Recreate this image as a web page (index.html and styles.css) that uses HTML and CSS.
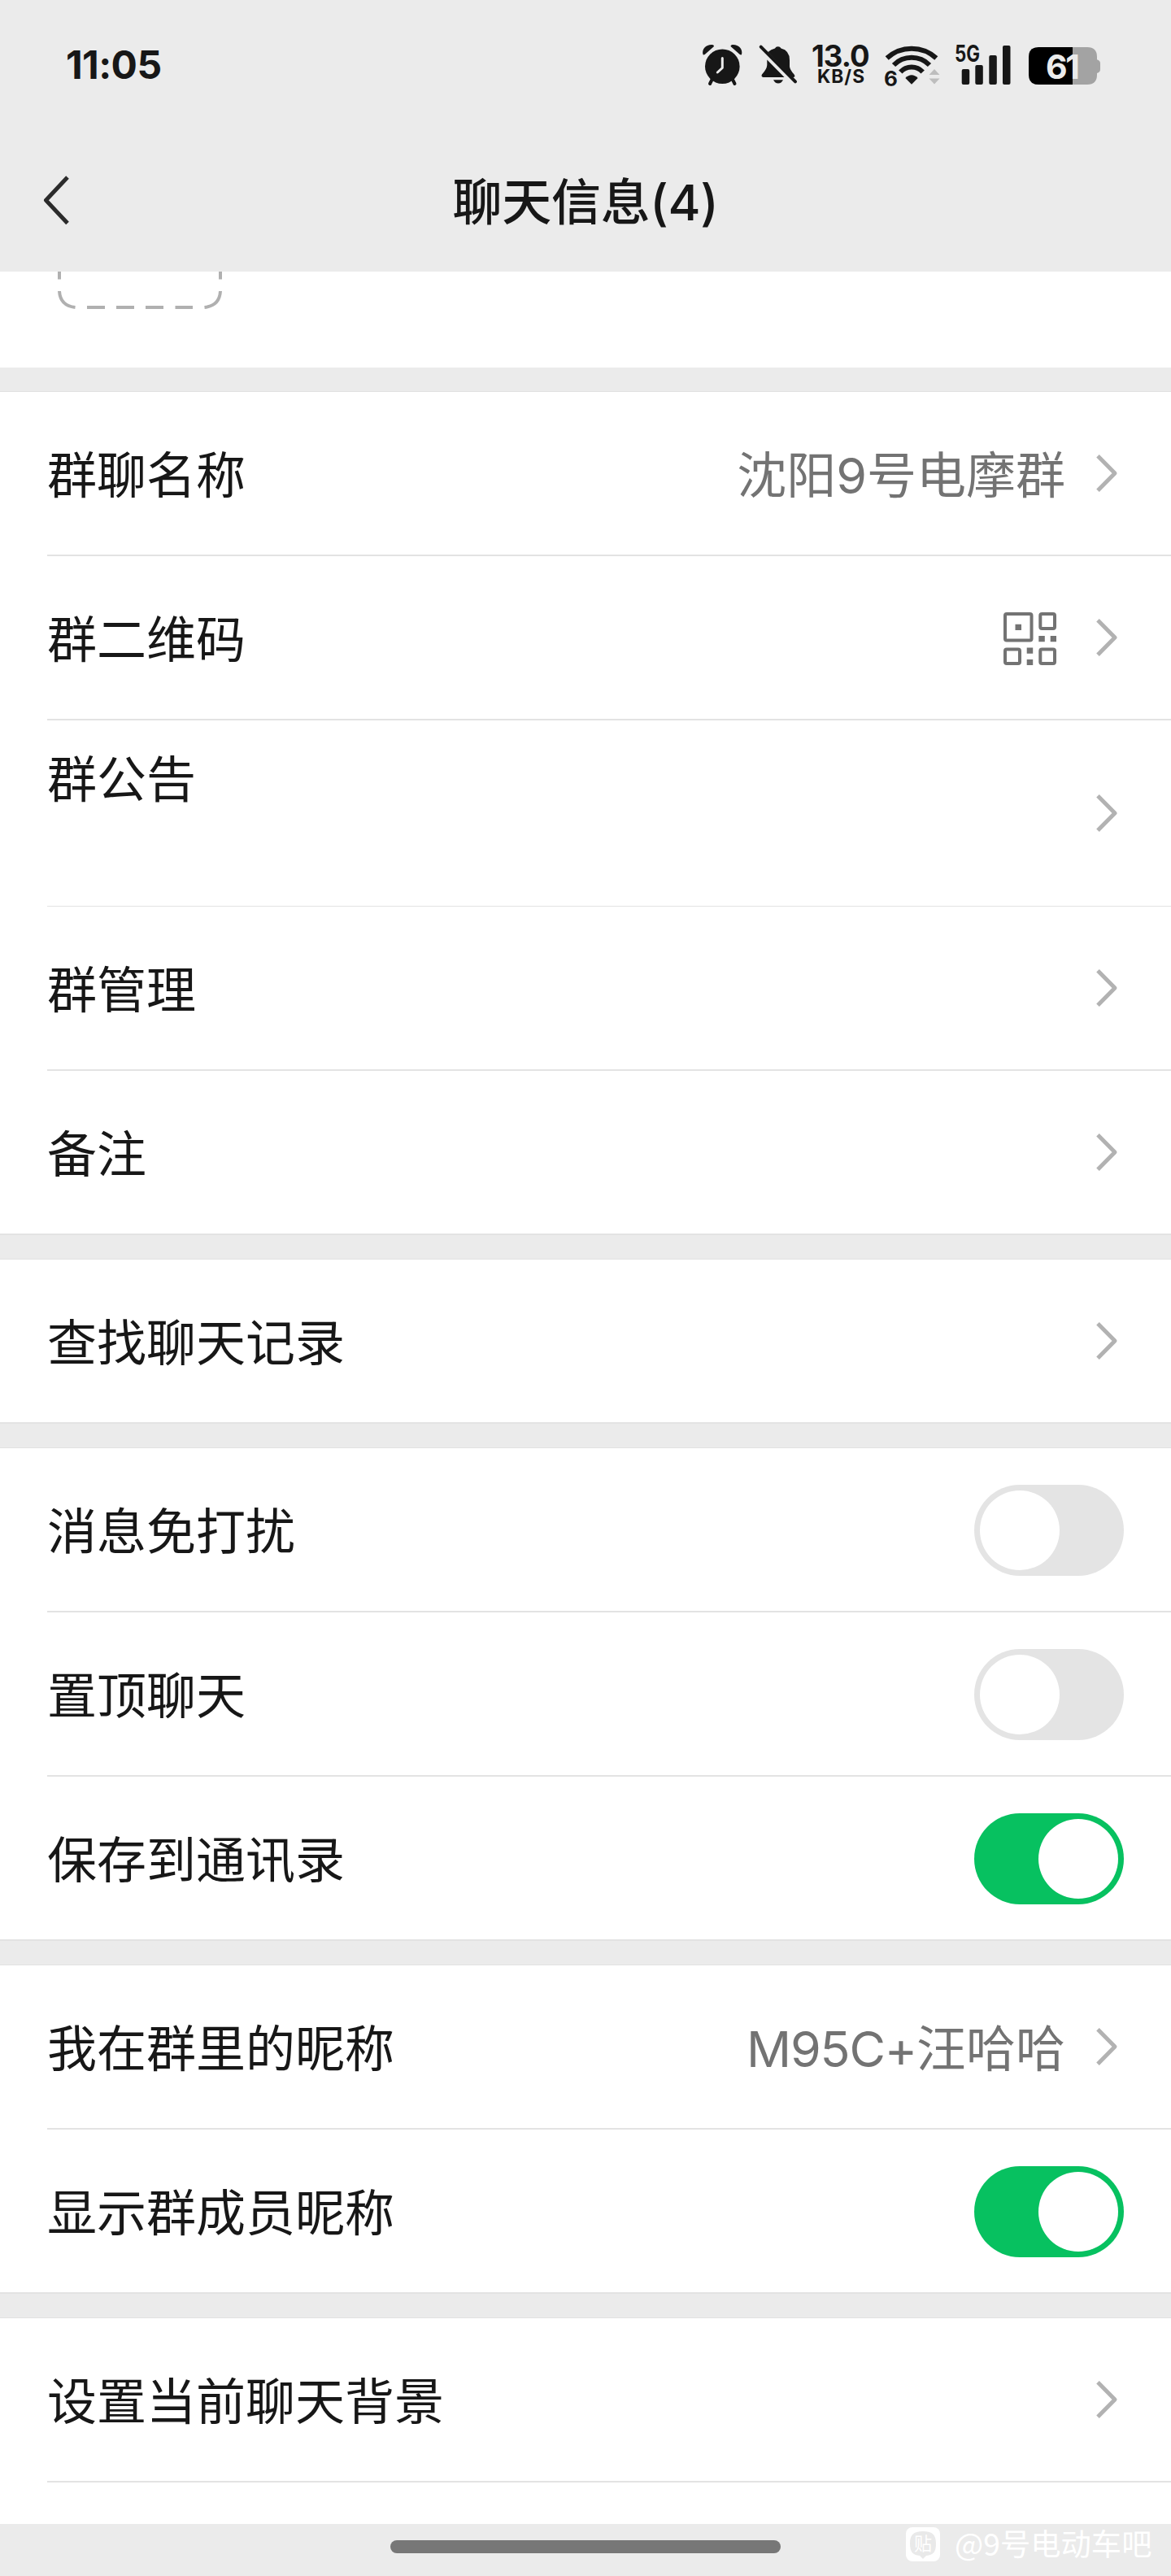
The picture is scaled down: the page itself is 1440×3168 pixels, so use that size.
FILE: index.html
```html
<!DOCTYPE html>
<html lang="zh-CN">
<head>
<meta charset="utf-8">
<title>聊天信息</title>
<link rel="stylesheet" href="styles.css">
</head>
<body>
<svg class="defs" aria-hidden="true">
  <symbol id="chevron" viewBox="0 0 28 50"><path d="M3 3.8 24 25 3 46.2" fill="none" stroke="#b2b2b2" stroke-width="5" stroke-linejoin="round"/></symbol>
</svg>
<div class="screen">
  <header class="top">
    <div class="status">
      <span class="time">11:05</span>
      <svg class="alarm" viewBox="862 50 52 60" width="52" height="60">
        <g fill="#171717"><circle cx="888.3" cy="81.7" r="21.3"/>
        <path d="M864.5 67C862.5 60 869 54.300 876 55Q879 56 877.500 57.500L867 66.800Q865 68 864.500 67ZM912 67C914 60 907.500 54.300 900.500 55Q897.500 56 899 57.500L909.500 66.800Q911.500 68 912 67Z"/></g>
        <path d="M876 97l-3 6M900.500 97l3 6" stroke="#171717" stroke-width="4" stroke-linecap="round"/>
        <path d="M888.300 71.500v12l-6 5.500" fill="none" stroke="#ebebeb" stroke-width="3" stroke-linecap="round" stroke-linejoin="round"/>
      </svg>
      <svg class="bell" viewBox="932 50 50 60" width="50" height="60">
        <g fill="#171717"><path d="M944.500 64Q948 60.500 953 59.500Q954 57.300 956.700 57.300T960.500 59.500Q971 62 971 74V82Q971.500 86 976.500 91.500Q978.500 94 976 95H974Z"/>
        <path d="M943.300 73.500 964.500 95H938.500Q935.500 94 937 91.500Q943 85 943.300 80Z"/>
        <path d="M951 98.300H963Q961 102.500 957 102.500T951 98.300Z"/></g>
        <path d="M935.700 57.700 978 100.300" stroke="#171717" stroke-width="4" stroke-linecap="round"/>
      </svg>
      <svg class="speed" viewBox="997 50 74 60" width="74" height="60" fill="#171717">
        <text x="998" y="81.700" font-size="36.500" font-weight="650" textLength="71.500">13.0</text>
        <text x="1005" y="102" font-size="22.700" font-weight="650" textLength="58">KB/S</text>
      </svg>
      <svg class="wifi" viewBox="1086 50 74 60" width="74" height="60">
        <path d="M1090.700 71.500A44.800 44.800 0 0 1 1151.300 71.500M1099 80A31 31 0 0 1 1143 80M1107.300 88.500A18.500 18.500 0 0 1 1134.700 88.500" fill="none" stroke="#171717" stroke-width="6"/>
        <path d="M1113.300 96Q1121 88.500 1128.700 96L1121 103.800Z" fill="#171717"/>
        <path d="M1142.500 92 1149 85 1155.500 92ZM1142.500 96.500H1155.500L1149 103.500Z" fill="#bdbdbd"/>
        <text x="1087" y="105.800" font-size="26" font-weight="700" fill="#171717">6</text>
      </svg>
      <svg class="signal" viewBox="1173 50 72 60" width="72" height="60" fill="#171717">
        <text x="1174" y="76" font-size="28" font-weight="700" textLength="31" lengthAdjust="spacingAndGlyphs">5G</text>
        <rect x="1182.700" y="85" width="9.500" height="19" rx="2"/><rect x="1199.300" y="80" width="9.500" height="24" rx="2"/><rect x="1216.300" y="68" width="9.500" height="36" rx="2"/><rect x="1233" y="56" width="9.500" height="48" rx="2"/>
      </svg>
      <svg class="battery" viewBox="1264 50 90 60" width="90" height="60">
        <path d="M1319 58h18q12 0 12 12v3.300q4 1 4 4.700v7.300q0 3.700-4 4.700v2q0 12-12 12h-18Z" fill="#a3a3a3"/>
        <path d="M1319 58h-42q-12 0-12 12v22q0 12 12 12h42Z" fill="#000"/>
        <text x="1286" y="96.500" font-size="41" font-weight="650" fill="#ebebeb" textLength="42">61</text>
      </svg>
    </div>
    <div class="nav">
      <svg class="back" viewBox="0 0 36 64" width="36" height="64"><path d="M31 4 4.500 32.300 31 60.500" fill="none" stroke="#2b2b2b" stroke-width="5" stroke-linejoin="round"/></svg>
      <h1 class="title">聊天信息(4)</h1>
    </div>
  </header>

  <section class="members">
    <svg viewBox="71 334 202 50" width="202" height="50"><g fill="none" stroke="#b0b0b0" stroke-width="4"><path d="M73 333V343.500M271 333V343.500M73 358Q74 376 92.500 378M271 358Q270 376 251.500 378"/><path d="M107 378h22M143 378h22M179 378h22M215.500 378h21.500"/></g></svg>
  </section>

  <section class="group">
    <div class="row"><span class="label">群聊名称</span><span class="value">沈阳9号电摩群</span><svg class="chev"><use href="#chevron"/></svg></div>
    <div class="row"><span class="label">群二维码</span>
      <svg class="qr" viewBox="0 0 65 65" width="65" height="65"><g fill="none" stroke="#737373" stroke-width="4"><rect x="2" y="2" width="32.500" height="32.500" rx="2"/><rect x="45.300" y="2" width="17.700" height="18" rx="2"/><rect x="2" y="45.500" width="18" height="17.500" rx="2"/><rect x="45.300" y="45.500" width="17.700" height="17.500" rx="2"/></g><path d="M14.500 14.700h7.500v7.300h-7.500ZM43.300 29h7.500v7.300h-7.500ZM57.700 29h7.300v7.300h-7.300ZM28.700 43.500h7.500v7.300h-7.500ZM28.700 58h7.500v7h-7.500Z" fill="#737373"/></svg>
      <svg class="chev"><use href="#chevron"/></svg></div>
    <div class="row notice"><span class="label">群公告</span><svg class="chev"><use href="#chevron"/></svg></div>
    <div class="row"><span class="label">群管理</span><svg class="chev"><use href="#chevron"/></svg></div>
    <div class="row"><span class="label">备注</span><svg class="chev"><use href="#chevron"/></svg></div>
  </section>

  <section class="group">
    <div class="row"><span class="label">查找聊天记录</span><svg class="chev"><use href="#chevron"/></svg></div>
  </section>

  <section class="group">
    <div class="row"><span class="label">消息免打扰</span><span class="switch"><i class="knob"></i></span></div>
    <div class="row"><span class="label">置顶聊天</span><span class="switch"><i class="knob"></i></span></div>
    <div class="row"><span class="label">保存到通讯录</span><span class="switch on"><i class="knob"></i></span></div>
  </section>

  <section class="group">
    <div class="row"><span class="label">我在群里的昵称</span><span class="value"><span class="latin">M95C+</span>汪哈哈</span><svg class="chev"><use href="#chevron"/></svg></div>
    <div class="row"><span class="label">显示群成员昵称</span><span class="switch on"><i class="knob"></i></span></div>
  </section>

  <section class="group last">
    <div class="row"><span class="label">设置当前聊天背景</span><svg class="chev"><use href="#chevron"/></svg></div>
  </section>

  <footer class="bottom">
    <div class="home"></div>
    <div class="mark">
      <svg viewBox="0 0 42 42" width="42" height="42"><rect width="42" height="42" rx="8" fill="#fff"/><path d="M21 5C9 5 5 10 5 20s3 14 12 15l4 4 4-4c9-1 12-5 12-15S33 5 21 5Z" fill="#e9e9e9"/><text class="tie" x="10" y="28" font-size="22" fill="#fff">贴</text></svg>
      <span class="mark-text">@9号电动车吧</span>
    </div>
  </footer>
</div>
</body>
</html>
```
FILE: styles.css
```css
* { box-sizing: border-box; }
body { margin: 0; background: #ebebeb; font-family: Inter, "Noto Sans CJK SC", sans-serif; color: #171717; }
.defs { display: none; }
.screen { width: 1440px; height: 3168px; overflow: hidden; display: flex; flex-direction: column; background: #ebebeb; }
.top { height: 334px; flex: none; }
.status { height: 160px; padding: 50px 86px 0 81px; display: flex; align-items: flex-start; }
.status svg { flex: none; overflow: visible; }
.time { margin-right: auto; height: 60px; line-height: 59px; font-size: 48px; font-weight: 650; letter-spacing: -0.6px; white-space: nowrap; }
.bell { margin-left: 18px; }
.speed { margin-left: 15px; }
.wifi { margin-left: 15px; }
.signal { margin-left: 13px; }
.battery { margin-left: 19px; }
.nav { height: 174px; display: grid; grid-template-columns: 86px 1fr 86px; align-items: start; }
.back { margin: 54px 0 0 52px; }
.title { margin: 0; height: 174px; line-height: 178px; font-size: 61px; font-weight: 500; letter-spacing: -0.3px; text-align: center; white-space: nowrap; }
.members { height: 118px; flex: none; background: #fff; padding-left: 71px; margin-bottom: 30px; }
.members svg { display: block; }
.group { flex: none; background: #fff; margin-bottom: 30px; box-shadow: 0 -1px 0 #e1e1e1; }
.row { height: 202px; margin-left: 58px; padding: 0 58px 0 0; display: flex; align-items: center; border-bottom: 2px solid #e3e3e3; }
.row:last-child { margin-left: 0; padding-left: 58px; }
.label { margin-right: auto; padding-top: 6px; font-size: 61px; line-height: 80px; white-space: nowrap; }
.value { padding-top: 6px; font-size: 61px; line-height: 80px; color: #737373; margin-right: 37px; white-space: nowrap; }
.latin { letter-spacing: -1.2px; }
.chev { width: 28px; height: 50px; margin-right: 7px; flex: none; }
.qr { margin-right: 48px; margin-top: 2px; }
.notice { height: 229px; border-bottom: 1px solid #e3e3e3; }
.notice .label { align-self: flex-start; padding-top: 0; margin-top: 33px; }
.switch { width: 184px; height: 112px; padding: 7px; border-radius: 56px; background: #e4e4e4; display: flex; margin-top: 2px; }
.knob { width: 98px; height: 98px; border-radius: 50%; background: #fff; }
.on { background: #07c160; justify-content: flex-end; }
.last { height: 253px; margin-bottom: 0; }
.last .row { margin-left: 58px; padding-left: 0; }
.bottom { height: 64px; flex: none; display: grid; grid-template-columns: 480px 480px 1fr; }
.home { grid-column: 2; height: 16px; margin-top: 20px; border-radius: 8px; background: #777; }
.mark { grid-column: 3; display: flex; align-items: flex-start; padding: 4px 0 0 154px; gap: 18px; }
.mark svg { flex: none; }
.tie { font-family: "Noto Sans CJK SC", sans-serif; }
.mark-text { font-family: "Noto Sans CJK SC", sans-serif; font-size: 37.3px; line-height: 39px; color: #fff; white-space: nowrap; }
```
